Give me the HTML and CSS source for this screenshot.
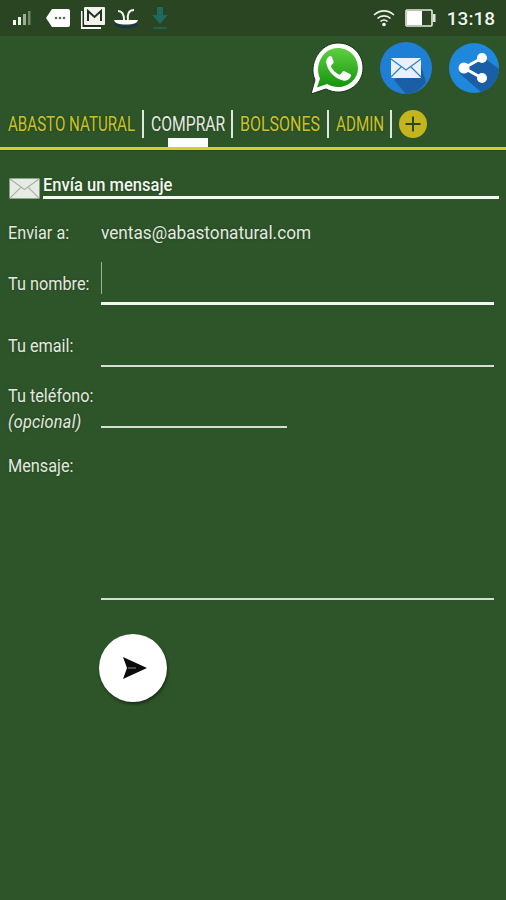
FILE: index.html
```html
<!DOCTYPE html>
<html lang="es">
<head>
    <meta charset="UTF-8">
    <meta name="viewport" content="width=device-width, initial-scale=1.0">
    <title>Abasto Natural</title>
    <link rel="stylesheet" href="styles.css">
</head>
<body>

    <div class="statusbar">
        <div class="status-left">
            <svg class="ic-signal" width="20" height="16" viewBox="0 0 20 16">
                <rect x="1" y="10" width="3" height="5" fill="#fff"/>
                <rect x="6" y="7" width="3" height="8" fill="#e8eee4"/>
                <rect x="11" y="4" width="3" height="11" fill="#9db094"/>
                <rect x="16" y="1" width="2.5" height="14" fill="#71896a"/>
            </svg>
            <svg class="ic-msg" width="26" height="20" viewBox="0 0 26 20">
                <path d="M7 1H23a2 2 0 0 1 2 2V17a2 2 0 0 1-2 2H7L1 10Z" fill="#fff"/>
                <circle cx="11" cy="10" r="1.3" fill="#56705a"/>
                <circle cx="15" cy="10" r="1.3" fill="#56705a"/>
                <circle cx="19" cy="10" r="1.3" fill="#56705a"/>
            </svg>
            <svg class="ic-gmail" width="26" height="24" viewBox="0 0 26 24">
                <rect x="1" y="5" width="20" height="18" fill="#fff"/>
                <rect x="2.5" y="4" width="19" height="17" fill="#1d2f19"/>
                <rect x="4" y="1" width="21" height="18" rx="1" fill="#f2f2ec"/>
                <path d="M8 15V5L14.500 11L21 5V15" fill="none" stroke="#22301f" stroke-width="2"/>
            </svg>
            <svg class="ic-bird" width="26" height="20" viewBox="0 0 26 20">
                <path d="M1 12H25C24 15.500 20 16.500 13 16.500C6 16.500 2 15.500 1 12Z" fill="#fff"/>
                <path d="M2 16C8 20 18 20 24 16" fill="none" stroke="#17305c" stroke-width="1.800"/>
                <path d="M5 3C9 3 11 6 11 12M21 2C16 2 14 6 15 12" fill="none" stroke="#f2f4ee" stroke-width="2"/>
            </svg>
            <svg class="ic-down" width="16" height="24" viewBox="0 0 16 24">
                <path d="M5 1H11V9H16L8 18L0 9H5Z" fill="#1f6a5c"/>
                <rect x="1" y="21" width="14" height="2" fill="#1f5f50"/>
            </svg>
        </div>
        <div class="status-right">
            <svg width="22" height="18" viewBox="0 0 22 18">
                <path d="M1 6C7 0.500 15 0.500 21 6M4.500 9.500C8 6 14 6 17.500 9.500M7.500 12.500C9.500 10.800 12.500 10.800 14.500 12.500" fill="none" stroke="#f1f4ee" stroke-width="1.600"/>
                <circle cx="11" cy="15.500" r="1.800" fill="#fff"/>
            </svg>
            <svg class="ic-batt" width="31" height="18" viewBox="0 0 31 18">
                <rect x="1" y="1" width="26" height="16" rx="1" fill="none" stroke="#e8ece4" stroke-width="1.600"/>
                <rect x="2" y="2" width="15" height="14" fill="#fff"/>
                <rect x="28" y="5" width="2.500" height="8" fill="#dfe5da"/>
            </svg>
            <span class="clock">13:18</span>
        </div>
    </div>

    <div class="sharebar">
        <svg class="ic-whatsapp" width="54" height="54" viewBox="0 0 54 54">
            <defs>
                <linearGradient id="wa" x1="0" y1="0" x2="0" y2="1">
                    <stop offset="0" stop-color="#5fd03f"/>
                    <stop offset="1" stop-color="#14930f"/>
                </linearGradient>
            </defs>
            <path d="M1 53L5 39C-2 23 10 2 28 2C42 2 53 13 53 27C53 45 33 57 16 48Z" fill="#fff" stroke="#173516" stroke-width="1"/>
            <path d="M7 46.500L10 37.500C4 24 13 7 28 7C39 7 48 16 48 27C48 42 31 51 17 43Z" fill="url(#wa)"/>
            <path d="M20 15C17.500 16 15.500 19 16.500 23C18.500 31 25 37.500 33 39.500C37 40.500 40 38 41 35C41.300 34 41 33.500 40 33L34.500 30.300C33.500 29.800 33 30 32.300 31L30.700 33C30 33.800 29.500 33.800 28.500 33.300C25 31.500 23 29.300 21.300 26.300C20.800 25.300 21 24.800 21.700 24L23.200 22.300C23.800 21.500 23.800 21 23.500 20.200L21.700 15.800C21.300 15 20.800 14.800 20 15Z" fill="#fff"/>
        </svg>
        <svg class="ic-mail" width="52" height="52" viewBox="0 0 52 52">
            <circle cx="26" cy="26" r="26" fill="#1f7fd4"/>
            <path d="M14 38L40 20L46 40A26 26 0 0 1 26 52Z" fill="#1a5fa6"/>
            <rect x="11" y="16" width="30" height="20" rx="1" fill="#e8f0fa"/>
            <path d="M11 17L26 28L41 17M11 35L21 25M41 35L31 25" fill="none" stroke="#2f7dc8" stroke-width="1.200"/>
        </svg>
        <svg width="50" height="50" viewBox="0 0 50 50">
            <circle cx="25" cy="25" r="25" fill="#1f88dc"/>
            <path d="M10 30L34 14L50 26A25 25 0 0 1 32 49Z" fill="#1a5fa6"/>
            <path d="M33 15L15 25L33 35" fill="none" stroke="#fff" stroke-width="3"/>
            <circle cx="33" cy="15" r="5" fill="#fff"/>
            <circle cx="15" cy="25" r="5.500" fill="#fff"/>
            <circle cx="33" cy="35" r="5" fill="#fff"/>
        </svg>
    </div>

    <nav class="tabs">
        <a class="tab tab-abasto"><span class="narrow">ABASTO NATURAL</span></a>
        <a class="tab tab-comprar active"><span class="narrow">COMPRAR</span></a>
        <a class="tab tab-bolsones"><span class="narrow">BOLSONES</span></a>
        <a class="tab tab-admin"><span class="narrow">ADMIN</span></a>
        <span class="tab-add">
            <svg width="28" height="28" viewBox="0 0 28 28">
                <circle cx="14" cy="14" r="14" fill="#c4b41e"/>
                <path d="M14 6.500V21.500M6.500 14H21.500" stroke="#2a4522" stroke-width="2"/>
            </svg>
        </span>
    </nav>

    <main class="content">
        <div class="msg-head">
            <svg width="31" height="21" viewBox="0 0 31 22" preserveAspectRatio="none">
                <rect x="0.500" y="0.500" width="30" height="21" fill="#e6ebe4"/>
                <path d="M1 1L15.500 12L30 1M1 21L12 9.500M30 21L19 9.500" fill="none" stroke="#a9b3a6" stroke-width="1.200"/>
            </svg>
            <h2><span class="narrow">Envía un mensaje</span></h2>
        </div>

        <form class="form">
            <label><span class="narrow">Enviar a:</span></label>
            <span class="address"><span class="narrow">ventas@abastonatural.com</span></span>

            <label class="lbl-name"><span class="narrow">Tu nombre:</span></label>
            <div class="field field-name"><span class="caret"></span></div>

            <label class="lbl-email"><span class="narrow">Tu email:</span></label>
            <div class="field field-email"></div>

            <label class="lbl-phone"><span class="narrow">Tu teléfono:<br><em>(opcional)</em></span></label>
            <div class="field field-phone"></div>

            <label class="lbl-msg"><span class="narrow">Mensaje:</span></label>
            <div class="field field-msg"></div>

            <button class="send" type="button" aria-label="Enviar">
                <svg width="26" height="24" viewBox="0 0 26 24">
                    <path d="M1 1L25 12L1 23L5 12Z" fill="#0c0c0c"/>
                    <path d="M6 12H14" stroke="#8a8a8a" stroke-width="1"/>
                </svg>
            </button>
        </form>
    </main>

</body>
</html>
```

FILE: styles.css
```css
html, body { height: 100%; }
body { margin: 0; background: #2e5429; color: #e9eee6; font-family: Roboto, "Liberation Sans", sans-serif; overflow: hidden; text-shadow: 0 0 2px rgba(20, 50, 20, 0.7); }

/* the app font is condensed, none is installed so Roboto gets squeezed */
.narrow { display: inline-block; white-space: nowrap; transform: scaleX(var(--sx, 0.855)); transform-origin: left; }

.statusbar { display: flex; justify-content: space-between; align-items: center; height: 36px; background: #2a4522; padding: 0 11px 0 12px; }
.status-left { display: flex; align-items: center; gap: 9px; }
.status-right { display: flex; align-items: center; gap: 10px; }
.ic-msg { margin-left: 4px; }
.ic-bird { margin-left: -2px; }
.ic-down { margin-left: 4px; }
.ic-batt { margin-right: 1px; }
.clock { font-size: 19px; font-weight: 500; color: #f2f4ef; }

.sharebar { display: flex; justify-content: flex-end; align-items: center; gap: 16px; height: 64px; padding-right: 7px; }
.ic-mail { margin-right: 1px; }

.tabs { display: flex; align-items: center; height: 47px; padding-left: 8px; border-bottom: 3px solid #d6cc2e; box-shadow: 0 1px 0 #214a1e; }
.tab { font-size: 20px; color: #cbc22b; padding-right: 7px; margin-right: 7px; line-height: 28px; border-right: 2px solid #dfe6da; position: relative; }
.tab-abasto { width: 127px; --sx: 0.756; }
.tab-comprar { width: 73px; --sx: 0.785; }
.tab-bolsones { width: 80px; --sx: 0.8; }
.tab-admin { width: 47px; --sx: 0.76; }
.tab.active { color: #e6ebe2; }
.tab.active::after { content: ""; position: absolute; left: 17px; width: 40px; bottom: -9px; height: 9px; background: #fff; }
.tab-add { display: flex; }

.content { padding: 24px 7px 0 9px; }
.msg-head { display: flex; align-items: flex-end; }
.msg-head h2 { flex: 1; margin: 0 0 0 3px; padding-bottom: 1px; font-size: 19px; font-weight: 500; color: #f4f6f2; line-height: 21px; border-bottom: 3px solid #f5f7f3; --sx: 0.87; }

.form { display: grid; grid-template-columns: 93px 1fr; font-size: 19px; margin: 21px 0 0 -1px; color: #e4eae0; }
.form label { line-height: 26px; }
.address { line-height: 26px; --sx: 0.905; }
.lbl-name { margin-top: 25px; }
.lbl-email { margin-top: 28px; }
.lbl-phone { margin-top: 16px; }
.lbl-msg { margin-top: 18px; }
.form em { font-style: italic; letter-spacing: 0.3px; }

.field { margin-right: 5px; box-sizing: border-box; }
.field-name { height: 44px; margin-top: 15px; border-bottom: 3px solid #f5f7f3; }
.field-email { height: 62px; border-bottom: 2px solid #d6ddd2; }
.field-phone { height: 61px; width: 186px; border-bottom: 2px solid #d6ddd2; }
.field-msg { height: 165px; border-bottom: 2px solid #d6ddd2; }
.caret { display: block; width: 1px; height: 32px; margin-top: 1px; background: #9fb09a; }

.send { grid-column: 2; display: flex; align-items: center; justify-content: center; width: 68px; height: 68px; margin: 34px 0 0 -2px; padding: 0; border: none; border-radius: 50%; background: #fff; box-shadow: 1px 2px 3px rgba(0, 0, 0, 0.45); }
.send svg { margin-left: 3px; }
```
